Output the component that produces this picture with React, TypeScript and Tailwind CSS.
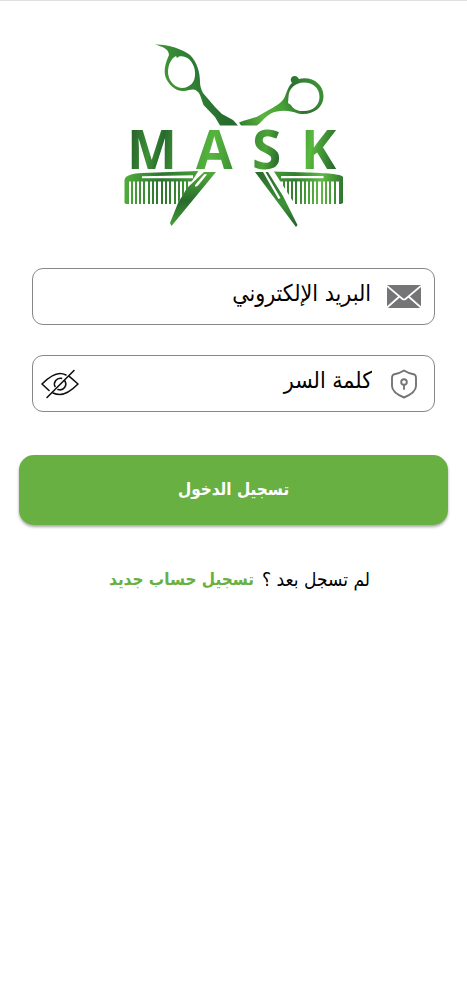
import { useState } from "react";

const leftTeeth = [132, 136, 140, 144, 149, 153, 157, 162, 166, 170, 175, 179, 183, 187];
const rightTeeth = [283, 287, 291, 295, 300, 304, 308, 312, 316, 321, 325, 329, 334];

function Logo() {
  return (
    <svg viewBox="120 40 228 192" className="h-48 w-57 [direction:ltr]" role="img" aria-label="MASK">
      <defs>
        <linearGradient id="handleLeft" gradientUnits="userSpaceOnUse" x1="160" y1="85" x2="212" y2="70">
          <stop offset="0" stopColor="#479c35" />
          <stop offset="0.6" stopColor="#2f8034" />
          <stop offset="1" stopColor="#276b2d" />
        </linearGradient>
        <linearGradient id="handleRight" gradientUnits="userSpaceOnUse" x1="242" y1="125" x2="322" y2="85">
          <stop offset="0" stopColor="#34822f" />
          <stop offset="0.25" stopColor="#5db43c" />
          <stop offset="0.5" stopColor="#46a036" />
          <stop offset="0.7" stopColor="#2c7032" />
          <stop offset="1" stopColor="#3f9437" />
        </linearGradient>
        <linearGradient id="letters" gradientUnits="userSpaceOnUse" x1="130" y1="135" x2="337" y2="168">
          <stop offset="0" stopColor="#25602c" />
          <stop offset="0.1" stopColor="#3f9136" />
          <stop offset="0.16" stopColor="#276b2d" />
          <stop offset="0.22" stopColor="#3c8a35" />
          <stop offset="0.4" stopColor="#56b53d" />
          <stop offset="0.55" stopColor="#348532" />
          <stop offset="0.65" stopColor="#4da338" />
          <stop offset="0.72" stopColor="#276b2d" />
          <stop offset="0.86" stopColor="#58ba3c" />
          <stop offset="1" stopColor="#24602c" />
        </linearGradient>
        <linearGradient id="comb" gradientUnits="userSpaceOnUse" x1="125" y1="175" x2="343" y2="190">
          <stop offset="0" stopColor="#4fae3a" />
          <stop offset="0.17" stopColor="#2b7430" />
          <stop offset="0.35" stopColor="#4aa238" />
          <stop offset="0.65" stopColor="#4aa238" />
          <stop offset="0.78" stopColor="#327f31" />
          <stop offset="0.9" stopColor="#5fbc40" />
          <stop offset="1" stopColor="#2d7630" />
        </linearGradient>
        <linearGradient id="blade" gradientUnits="userSpaceOnUse" x1="0" y1="171" x2="0" y2="226">
          <stop offset="0" stopColor="#55ad3b" />
          <stop offset="0.55" stopColor="#286a2c" />
          <stop offset="1" stopColor="#46a038" />
        </linearGradient>
        <linearGradient id="bladeRight" gradientUnits="userSpaceOnUse" x1="0" y1="171" x2="0" y2="226">
          <stop offset="0" stopColor="#296b2d" />
          <stop offset="0.6" stopColor="#3c9235" />
          <stop offset="1" stopColor="#26622d" />
        </linearGradient>
        <clipPath id="leftEdge">
          <path d="M120 170H199L176 206H120Z" />
        </clipPath>
        <clipPath id="rightEdge">
          <path d="M273 170H348V206H296Z" />
        </clipPath>
      </defs>

      <path
        fill="url(#handleLeft)"
        fillRule="evenodd"
        d="M155 44.5C166 44 183 49 190 55C197 62 200 72 200 82C200 86 201 89 203 93L215 107L222 114L233 120L238 125.500H220L215 117L203.500 105L200 95C197 89 193 89 189 90C178 94 169 86 165.500 77C163 68 167 60 169 55C169 49 162 46.500 155 44.500ZM173 58C167 65 167 74 170 80C174 87 181 89.500 187 87C195 84 196.500 75 194 67C191 58 184 55 179 56.500L177 58L176 56Z"
      />
      <path
        fill="url(#handleRight)"
        fillRule="evenodd"
        d="M239 122.500C247 119 254 119 260 115C268 110 277 106 281 102C287 97 286 88 292 83C289 79 292 75.500 295 76C298 76.500 298 78 299 79C312 76 324 84 323.500 97C323 109 311 116 298 113.500C291 111 284 110 277 111.500C267 113 263 121 257 125.500H241ZM304 82.500C295 82.500 288.500 89 288.500 97L288 103L291 105C293 109 298 111.500 304 111C313 111 319.500 105 319.500 97C319.500 88 313 82.500 304 82.500Z"
      />

      <text
        x="127 196 252 301"
        y="168.500"
        textAnchor="start"
        fontFamily="'Open Sans', 'Noto Sans', sans-serif"
        fontWeight="700"
        fontSize="53"
        fill="url(#letters)"
      >
        MASK
      </text>

      <g fill="url(#comb)" clipPath="url(#leftEdge)">
        <path
          fillRule="evenodd"
          d="M124.500 180C125 175 134 173.500 142 173L200 171V181.500H129V204H126L124.500 203ZM142 176.200V178.300H193V175.200Z"
        />
        {leftTeeth.map((x) => (
          <rect key={x} x={x - 1} y="181" width="2" height="23" />
        ))}
      </g>
      <g fill="url(#comb)" clipPath="url(#rightEdge)">
        <path
          fillRule="evenodd"
          d="M272 171.500L308 172.500C324 173 342 174 343 177V203L341 204H339V181.500H272ZM281 176V178.300H323.500V176Z"
        />
        {rightTeeth.map((x) => (
          <rect key={x} x={x} y="181" width="2" height="23" />
        ))}
      </g>

      <path
        fill="url(#blade)"
        fillRule="evenodd"
        d="M204 172H216L171.500 226L170 223L178 203L187 188ZM204.500 174L195 185L195.500 187L198 185.500L207 174.500Z"
      />
      <path fill="url(#bladeRight)" d="M255 172H263L278.500 199L280.500 198L265.500 172H268L283 196L297.500 225L296 227Z" />
    </svg>
  );
}

function MailIcon() {
  return (
    <svg viewBox="0 0 34 24" className="h-6 w-[34px] shrink-0" aria-hidden="true">
      <rect width="34" height="23" rx="1" fill="#757577" />
      <path d="M0 1L15.500 14Q17 15 18.500 14L34 1M0 22.500L12.500 11.500M34 22.500L21.500 11.500" fill="none" stroke="#fff" strokeWidth="1.700" />
    </svg>
  );
}

function ShieldIcon() {
  return (
    <svg viewBox="0 0 28 30" className="h-[30px] w-7 shrink-0" fill="none" stroke="#757577" strokeWidth="1.900" strokeLinecap="round" strokeLinejoin="round" aria-hidden="true">
      <path d="M14 1.500C17 3.500 20 4.500 23.500 5.200C25.500 5.700 26 7 26 9V17C26 22.500 20 26 14 28.500C8 26 2 22.500 2 17V9C2 7 2.500 5.700 4.500 5.200C8 4.500 11 3.500 14 1.500Z" />
      <circle cx="14" cy="13" r="2.800" />
      <path d="M14 16V20" />
    </svg>
  );
}

function EyeOffIcon() {
  return (
    <svg viewBox="0 0 38 30" className="h-[30px] w-[38px]" fill="none" stroke="#111" strokeWidth="1.600" strokeLinecap="round" strokeLinejoin="round" aria-hidden="true">
      <path d="M8 21.500L1 15C8 8 14 4.500 19 4.500C21 4.500 23 5 25 6M28 7.200L37 15C30 22 24 25.500 19 25.500C16 25.500 14 25 12 24" />
      <path d="M33 1.500L6 28.500" />
      <path d="M20.500 9.400A5.800 5.800 0 0 0 14 17.500M23.500 11.500A5.800 5.800 0 0 1 17 20.500" />
    </svg>
  );
}

const inputClass =
  "h-full min-w-0 flex-1 bg-transparent pb-2 text-right text-[23px] text-black outline-none placeholder:overflow-visible placeholder:text-black placeholder:opacity-100";

export default function App() {
  const [visible, setVisible] = useState(false);

  return (
    <main
      dir="rtl"
      className="min-h-screen border-t border-[#e0e0e0] bg-white font-['DejaVu_Sans_Condensed','DejaVu_Sans',sans-serif] text-black"
    >
      <div className="flex justify-center pt-[39px]">
        <Logo />
      </div>
      <form className="mt-9 px-[19px]" onSubmit={(e) => e.preventDefault()}>
        <div className="mx-[13px] flex flex-col gap-[30px]">
          <label className="flex h-[57px] items-center gap-4 rounded-[11px] border border-[#87878b] ps-[13px] pe-2">
            <MailIcon />
            <input type="email" aria-label="البريد الإلكتروني" placeholder="البريد الإلكتروني" className={inputClass} />
          </label>
          <div className="flex h-[57px] items-center rounded-[11px] border border-[#87878b] ps-4 pe-2">
            <label className="flex h-full min-w-0 flex-1 items-center gap-[18px]">
              <ShieldIcon />
              <input type={visible ? "text" : "password"} aria-label="كلمة السر" placeholder="كلمة السر" className={inputClass} />
            </label>
            <button type="button" aria-label="إظهار كلمة السر" aria-pressed={visible} onClick={() => setVisible(!visible)}>
              <EyeOffIcon />
            </button>
          </div>
        </div>
        <button
          type="submit"
          className="mt-[43px] h-[70px] w-full rounded-[15px] bg-[#69b043] text-[17px] font-bold text-white shadow-[0_2px_3px_rgba(0,0,0,0.35)]"
        >
          تسجيل الدخول
        </button>
      </form>
      <p className="mt-10 flex items-center justify-center gap-2 pe-3 text-[19px] leading-7">
        <span>لم تسجل بعد ؟</span>
        <a href="#register" className="text-[17px] font-bold text-[#69b043]">
          تسجيل حساب جديد
        </a>
      </p>
    </main>
  );
}
